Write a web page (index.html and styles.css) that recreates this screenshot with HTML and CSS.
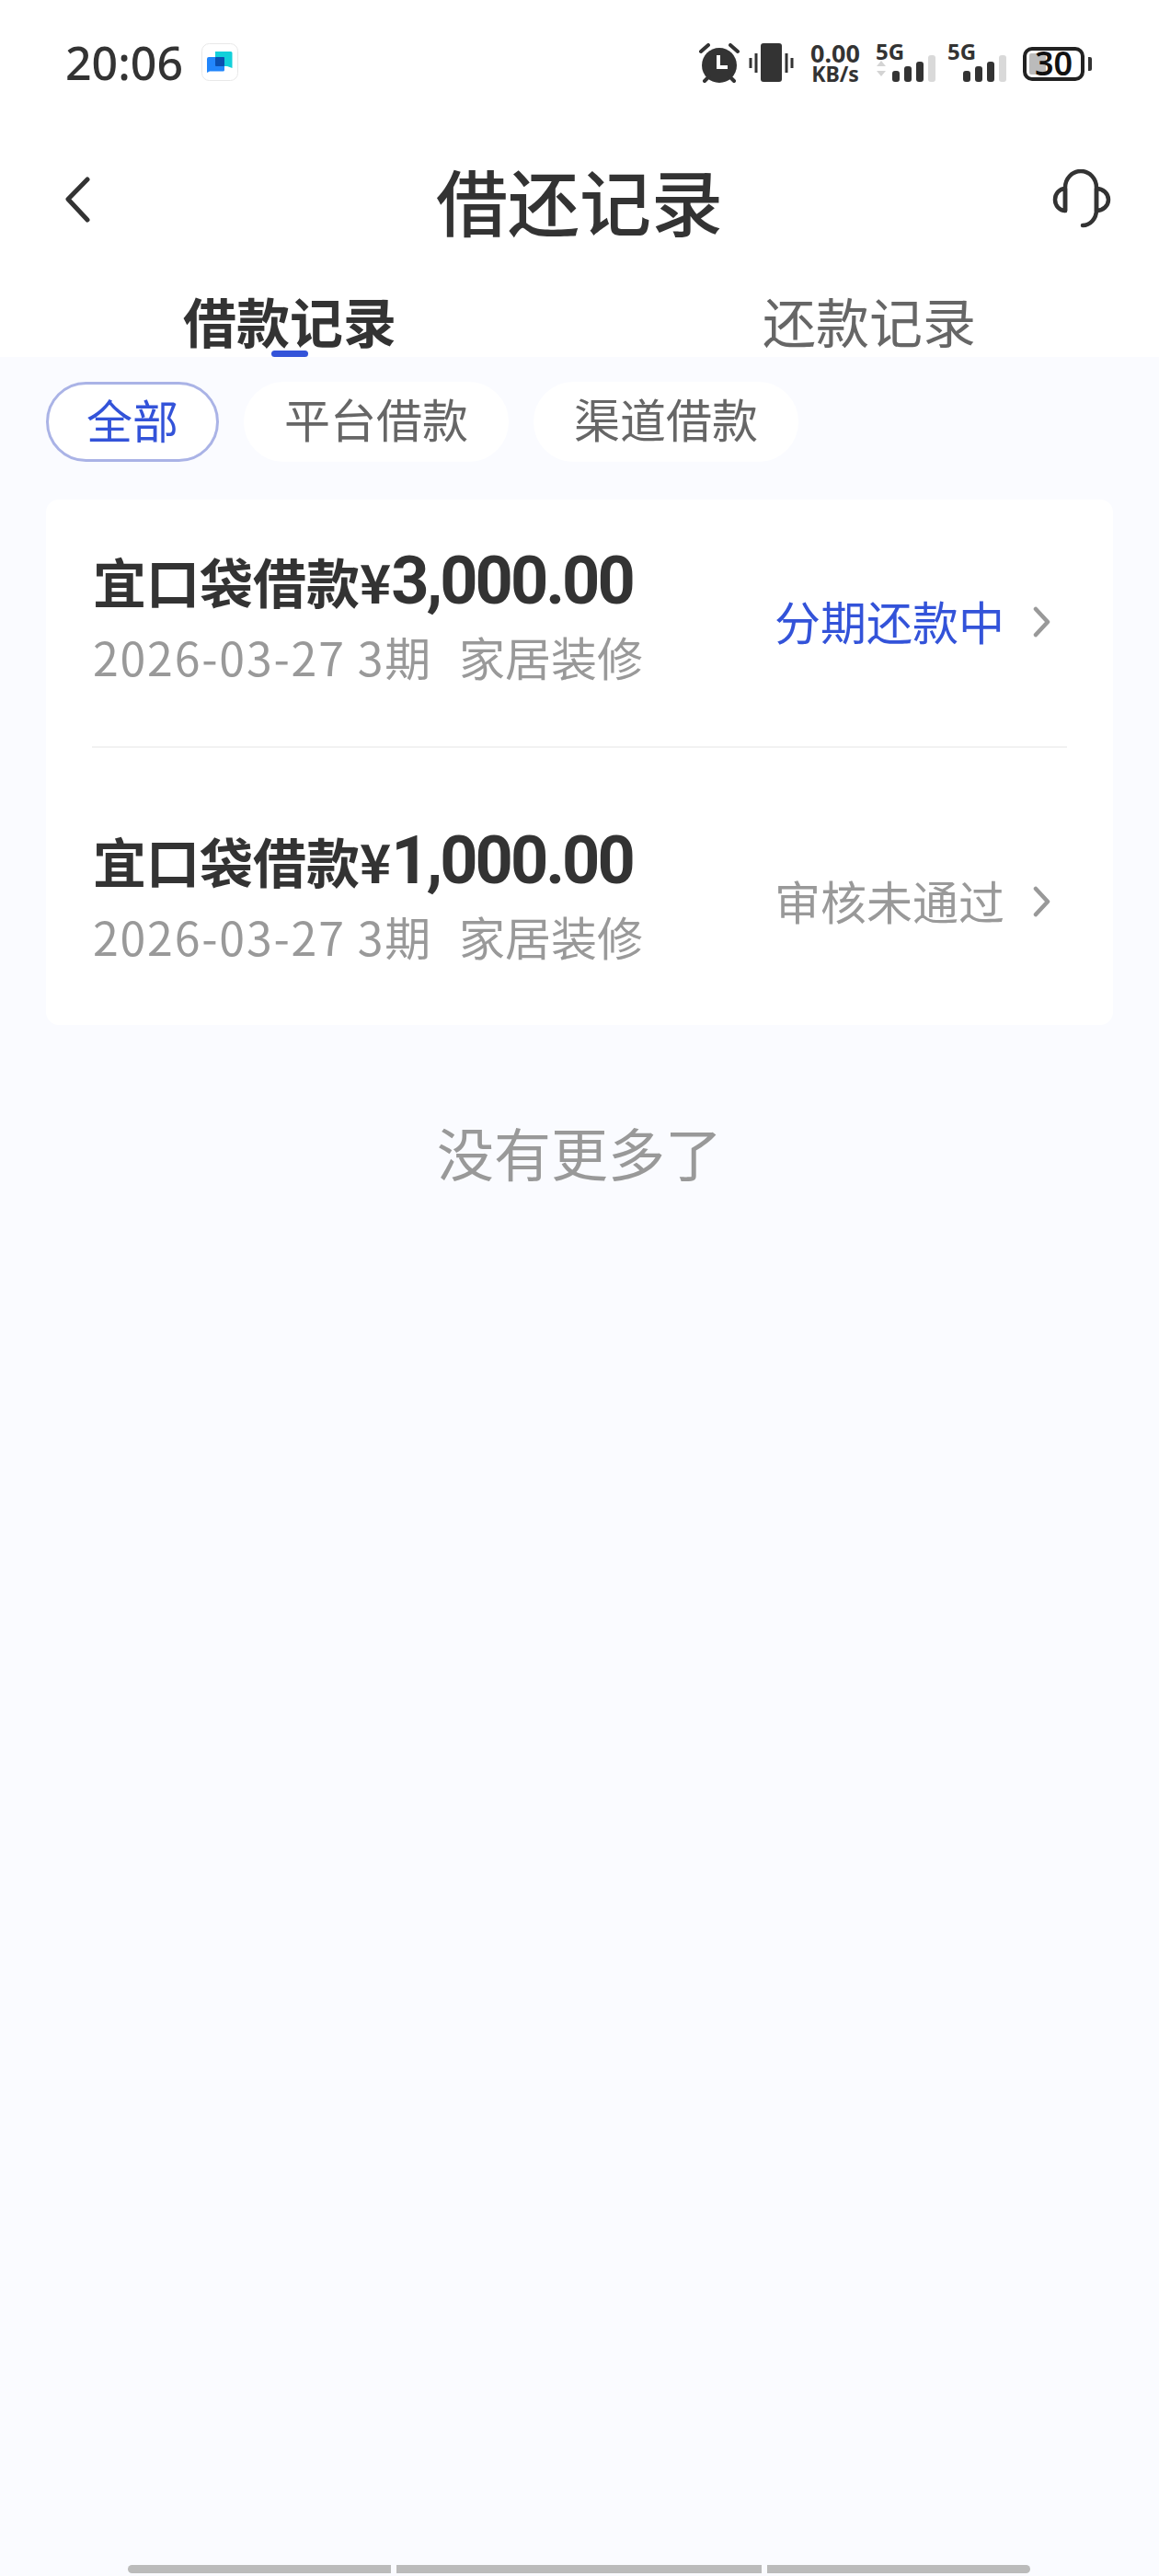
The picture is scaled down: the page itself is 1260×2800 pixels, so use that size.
FILE: index.html
```html
<!DOCTYPE html>
<html lang="zh-CN">
<head>
<meta charset="UTF-8">
<meta name="viewport" content="width=device-width, initial-scale=1.0">
<title>借还记录</title>
<link rel="stylesheet" href="styles.css">
</head>
<body>

<div class="page">

<header class="top">
  <div class="statusbar">
    <span class="time">20:06</span>
    <svg class="notify" width="40" height="41" viewBox="0 0 40 41">
      <rect x="0.5" y="0.5" width="39" height="40" rx="8" fill="#fff" stroke="#e8e8e8"/>
      <path d="M15 9h17a1.500 1.500 0 0 1 1.500 1.500V27L28 25H15z" fill="#12d0da"/>
      <path d="M8 15h15.500a1.500 1.500 0 0 1 1.500 1.500V29a1.500 1.500 0 0 1-1.500 1.500H9L6 32V17a2 2 0 0 1 2-2z" fill="#2286fb"/>
      <rect x="15" y="15" width="10" height="10" rx="1" fill="#0a4fb0"/>
    </svg>
    <div class="status-right">
      <svg width="46" height="44" viewBox="0 0 46 44">
        <circle cx="23" cy="24" r="19" fill="#333"/>
        <path d="M22 13v13h10" fill="none" stroke="#fff" stroke-width="4"/>
        <path d="M3 9l8-7M43 9l-8-7M7 41l5-5M39 41l-5-5" stroke="#333" stroke-width="4" stroke-linecap="round"/>
      </svg>
      <svg class="vibrate" width="50" height="42" viewBox="0 0 50 42">
        <rect x="13" y="0" width="23" height="42" rx="3" fill="#333"/>
        <path d="M2 16v11M8 11v21M41 11v21M47 16v11" stroke="#333" stroke-width="3"/>
      </svg>
      <div class="speed"><b>0.00</b><span>KB/s</span></div>
      <div class="signal sim1">
        <span class="five-g">5G</span>
        <svg width="65" height="30" viewBox="0 0 65 30">
          <path d="M1 13l5-6 5 6zM1 18l5 6 5-6z" fill="#d4d4d4"/>
          <rect x="18" y="18" width="8" height="12" rx="3" fill="#333"/>
          <rect x="31" y="13" width="8" height="17" rx="3" fill="#333"/>
          <rect x="44" y="8" width="8" height="22" rx="3" fill="#333"/>
          <rect x="57" y="1" width="8" height="29" rx="3" fill="#d9d9d9"/>
        </svg>
      </div>
      <div class="signal sim2">
        <span class="five-g">5G</span>
        <svg width="65" height="30" viewBox="0 0 65 30">
          <rect x="18" y="18" width="8" height="12" rx="3" fill="#333"/>
          <rect x="31" y="13" width="8" height="17" rx="3" fill="#333"/>
          <rect x="44" y="8" width="8" height="22" rx="3" fill="#333"/>
          <rect x="57" y="1" width="8" height="29" rx="3" fill="#d9d9d9"/>
        </svg>
      </div>
      <div class="battery">
        <div class="battery-body">
          <span class="battery-fill"></span>
          <span class="battery-num">30</span>
        </div>
        <span class="battery-nub"></span>
      </div>
    </div>
  </div>

  <div class="navbar">
    <svg class="back" width="28" height="50" viewBox="0 0 28 50">
      <path d="M25 3L4 24.500 25 47" fill="none" stroke="#333" stroke-width="5" stroke-linecap="round" stroke-linejoin="round"/>
    </svg>
    <h1>借还记录</h1>
    <svg class="service" width="66" height="66" viewBox="0 0 66 66">
      <path d="M14 45V20a17 18 0 0 1 34 0v24c0 10-7 17-15 17" fill="none" stroke="#333" stroke-width="4.500" stroke-linecap="round"/>
      <path d="M14 21a11 12 0 0 0 0 24zM48 21a13 12 0 0 1 0 24z" fill="none" stroke="#333" stroke-width="4.500" stroke-linejoin="round"/>
    </svg>
  </div>

  <div class="tabs">
    <div class="tab active">借款记录<span class="tab-line"></span></div>
    <div class="tab">还款记录</div>
  </div>
</header>

<main class="content">
  <div class="chips">
    <div class="chip selected">全部</div>
    <div class="chip">平台借款</div>
    <div class="chip">渠道借款</div>
  </div>

  <div class="card">
    <div class="row">
      <div class="row-main">
        <div class="row-title">宜口袋借款¥<span class="amount">3,000.00</span></div>
        <div class="row-sub"><span class="row-date">2026-03-27 3期</span><span>家居装修</span></div>
      </div>
      <div class="row-status blue">分期还款中</div>
      <svg class="arrow" width="20" height="34" viewBox="0 0 20 34">
        <path d="M3 3l13 14L3 31" fill="none" stroke="#999" stroke-width="4.500" stroke-linecap="round" stroke-linejoin="round"/>
      </svg>
    </div>
    <div class="row">
      <div class="row-main">
        <div class="row-title">宜口袋借款¥<span class="amount">1,000.00</span></div>
        <div class="row-sub"><span class="row-date">2026-03-27 3期</span><span>家居装修</span></div>
      </div>
      <div class="row-status">审核未通过</div>
      <svg class="arrow" width="20" height="34" viewBox="0 0 20 34">
        <path d="M3 3l13 14L3 31" fill="none" stroke="#999" stroke-width="4.500" stroke-linecap="round" stroke-linejoin="round"/>
      </svg>
    </div>
  </div>

  <p class="no-more">没有更多了</p>

  <div class="gesture">
    <span class="seg-a"></span>
    <span class="seg-b"></span>
    <span class="seg-c"></span>
  </div>
</main>

</div>

</body>
</html>
```

FILE: styles.css
```css
* { box-sizing: border-box; }
body { margin: 0; font-family: "Noto Sans CJK SC", "Noto Sans", sans-serif; color: #333; background: #fafbff; }
.page { width: 1260px; height: 2800px; display: flex; flex-direction: column; overflow: hidden; }

.top { background: white; height: 388px; flex: none; }

.statusbar { height: 92px; padding: 47px 73px 0 71px; display: flex; align-items: flex-start; }
.time { font-family: "Noto Sans", sans-serif; font-size: 50px; line-height: 42px; font-weight: 500; color: #333; flex: none; }
.notify { margin-left: 20px; flex: none; }
.status-right { display: flex; align-items: flex-start; margin-left: auto; height: 44px; }
.vibrate { margin-left: 9px; }
.speed { margin-left: 18px; width: 52px; display: flex; flex-direction: column; align-items: center; font-family: "Noto Sans", sans-serif; }
.speed b { font-size: 27px; line-height: 22px; font-weight: 700; }
.speed span { font-size: 23px; line-height: 22px; font-weight: 700; }
.signal { display: flex; flex-direction: column; width: 65px; height: 44px; font-family: "Noto Sans", sans-serif; }
.sim1 { margin-left: 18px; }
.sim2 { margin-left: 12px; }
.five-g { font-size: 24px; line-height: 18px; font-weight: 700; }
.signal svg { margin-top: -6px; }
.sim2 .five-g { margin-left: 1px; }
.battery { display: flex; align-items: center; margin-left: 18px; height: 44px; }
.battery-body { width: 67px; height: 37px; border: 4px solid #222; border-radius: 10px; display: flex; align-items: center; justify-content: center; position: relative; }
.battery-fill { position: absolute; left: 3px; top: 3px; bottom: 3px; width: 18px; background: #bbb; border-radius: 2px; }
.battery-num { position: relative; font-family: "Noto Sans", sans-serif; font-size: 36px; line-height: 30px; font-weight: 600; color: #111; }
.battery-nub { width: 4px; height: 15px; background: #333; margin-left: 4px; border-radius: 0 2px 2px 0; }

.navbar { height: 90px; margin-top: 80px; display: grid; grid-template-columns: 1fr auto 1fr; align-items: center; padding: 0 50px; }
.navbar h1 { margin: 0; font-size: 78px; line-height: 90px; font-weight: 500; color: #333; }
.back { margin-left: 20px; }
.service { justify-self: end; }

.tabs { display: flex; margin-top: 46px; }
.tab { width: 630px; text-align: center; font-size: 58px; line-height: 80px; color: #666; position: relative; }
.tab.active { font-weight: 700; color: #333; }
.tab-line { position: absolute; left: 295px; top: 73px; width: 40px; height: 7px; border-radius: 4px; background: #3353d9; }

.content { flex: 1; display: flex; flex-direction: column; padding: 27px 50px 0; }

.chips { display: flex; gap: 27px; }
.chip { height: 87px; padding: 0 42px; border-radius: 44px; background: white; font-size: 50px; line-height: 74px; color: #666; border: 2px solid white; }
.chip.selected { color: #3353d9; border: 3px solid #aab3e6; padding: 0 41px; }

.card { margin-top: 41px; background: white; border-radius: 14px; padding: 0 50px; }
.row { display: flex; align-items: center; height: 268px; padding: 0 0 14px 1px; }
.row + .row { height: 303px; border-top: 2px solid #f2f2f2; padding: 20px 0 0 1px; }
.row-main { flex: 1; }
.row-title { font-size: 58px; line-height: 80px; font-weight: 700; color: #333; display: flex; align-items: baseline; white-space: nowrap; }
.amount { font-family: Roboto, sans-serif; font-size: 72px; letter-spacing: -3px; line-height: 80px; }
.row-sub { margin-top: 5px; display: flex; gap: 29px; font-size: 50px; line-height: 72px; color: #999; }
.row-date { letter-spacing: 1.800px; }
.row-status { font-size: 50px; line-height: 72px; color: #999; margin-top: 8px; }
.row-status.blue { color: #3353d9; }
.arrow { margin-left: 31px; margin-right: 17px; margin-top: 12px; }

.no-more { margin: 98px 0 0; text-align: center; font-size: 62px; line-height: 80px; color: #999; }

.gesture { margin-top: auto; margin-bottom: 3px; margin-left: 89px; display: flex; gap: 6px; }
.gesture span { height: 9px; background: #bbb; }
.seg-a { width: 286px; border-radius: 5px 0 0 5px; }
.seg-b { width: 397px; }
.seg-c { width: 286px; border-radius: 0 5px 5px 0; }
```
